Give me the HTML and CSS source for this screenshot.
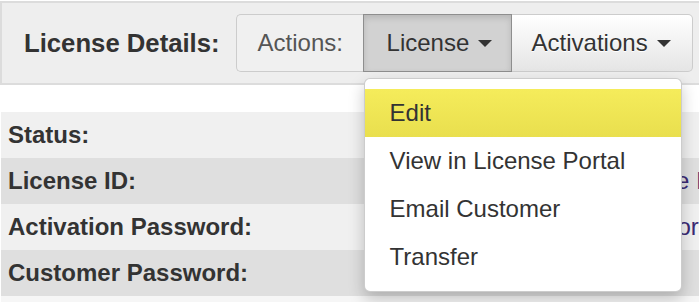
FILE: index.html
```html
<!DOCTYPE html>
<html lang="en">
<head>
  <meta charset="UTF-8">
  <title>License Details</title>
  <link rel="stylesheet" href="styles.css">
</head>
<body>
  <div class="toolbar">
    <h2>License Details:</h2>
    <div class="btn-group">
      <span class="btn btn-label">Actions:</span>
      <div class="dropdown">
        <button class="btn btn-active">License <span class="caret"></span></button>
        <ul class="menu">
          <li class="hover">Edit</li>
          <li>View in License Portal</li>
          <li>Email Customer</li>
          <li>Transfer</li>
        </ul>
      </div>
      <button class="btn btn-last">Activations <span class="caret"></span></button>
    </div>
  </div>

  <div class="details">
    <div class="row">
      <span class="label">Status:</span>
      <span class="value">Active</span>
    </div>
    <div class="row">
      <span class="label">License ID:</span>
      <a class="value" href="#">Show License ID</a>
    </div>
    <div class="row">
      <span class="label">Activation Password:</span>
      <a class="value" href="#">Show Password</a>
    </div>
    <div class="row">
      <span class="label">Customer Password:</span>
      <span class="value"></span>
    </div>
    <div class="row"></div>
  </div>
</body>
</html>
```

FILE: styles.css
```css
* {
  margin: 0;
  padding: 0;
  box-sizing: border-box;
  font-family: 'Liberation Sans', Arial, sans-serif;
}

body {
  background: #fff;
  color: #333;
  overflow: hidden;
}

.toolbar {
  margin: 1px -4px 0 0;
  height: 84px;
  border: 2px solid #dcdcdc;
  background-color: #eee;
  display: flex;
  align-items: center;
  padding: 0 0 0 22px;
}

.toolbar h2 {
  font-size: 25.7px;
  font-weight: bold;
  color: #333;
  margin-right: 16px;
}

.btn-group {
  display: flex;
  height: 58px;
}

.btn {
  font-size: 24px;
  height: 58px;
  display: flex;
  align-items: center;
  border: 1px solid #ccc;
  background: #f0f0f0;
  color: #333;
  cursor: pointer;
}

.btn-label {
  padding: 0 20px 0 21px;
  color: #555;
  border-radius: 5px 0 0 5px;
  border-right: none;
  width: 127px;
}

.dropdown {
  position: relative;
}

.btn-active {
  width: 149px;
  padding-left: 23px;
  background: #d2d2d2;
  border-color: #8e8e8e;
  box-shadow: inset 0 3px 6px rgba(0, 0, 0, 0.13);
}

.btn-last {
  width: 181px;
  padding-left: 20px;
  border-left: none;
  border-radius: 0 5px 5px 0;
  background: linear-gradient(to bottom, #fff, #e5e5e5);
  text-shadow: 0 1px 0 #fff;
}

.caret {
  display: inline-block;
  width: 0;
  height: 0;
  margin-left: 9px;
  border-top: 7px solid #333;
  border-left: 7px solid transparent;
  border-right: 7px solid transparent;
}

.menu {
  position: absolute;
  top: 64px;
  left: 1px;
  width: 318px;
  list-style: none;
  background: #fff;
  border: 1px solid rgba(0, 0, 0, 0.2);
  border-radius: 6px;
  box-shadow: 0 7px 16px rgba(0, 0, 0, 0.22);
  padding: 10px 0;
  z-index: 10;
}

.menu li {
  height: 48px;
  display: flex;
  align-items: center;
  padding-left: 25px;
  font-size: 24px;
  color: #333;
  white-space: nowrap;
}

.menu li.hover {
  background: linear-gradient(to bottom, #f5ec5b, #e9df4e);
}

.details {
  margin: 27px 0 0 1px;
}

.row {
  height: 46px;
  display: grid;
  grid-template-columns: 532px 1fr;
  align-items: center;
  padding-left: 7px;
  background-color: #f0f0f0;
  white-space: nowrap;
  overflow: hidden;
}

.row:nth-child(even) {
  background-color: #dfdfdf;
}

.row:last-child {
  background-color: #f6f6f6;
}

.label {
  font-size: 24px;
  font-weight: bold;
  color: #333;
}

.value {
  font-size: 24px;
  color: #3b2a74;
  text-decoration: none;
}
```
